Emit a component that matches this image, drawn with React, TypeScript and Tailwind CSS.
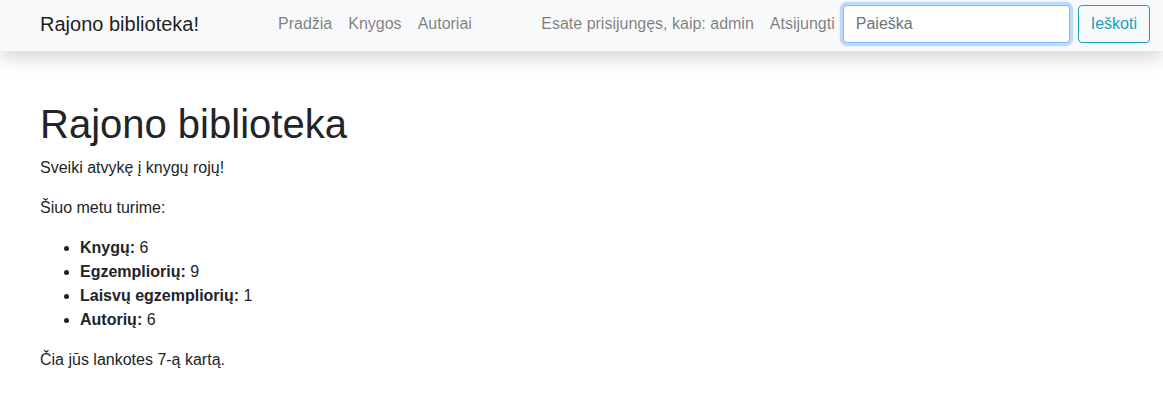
export default function App() {
  const stats = [
    { label: "Knygų:", value: 6 },
    { label: "Egzempliorių:", value: 9 },
    { label: "Laisvų egzempliorių:", value: 1 },
    { label: "Autorių:", value: 6 },
  ]

  return (
    <div className="min-h-screen bg-white text-[#212529] font-['Liberation_Sans',Arial,sans-serif] text-base leading-6">
      {/* Navbar */}
      <nav className="relative z-10 flex items-center h-[51px] pt-[5px] pb-[8px] pl-10 pr-[13px] bg-[#f8f9fa] shadow-[0_8px_16px_rgba(0,0,0,0.15)]">
        <a className="text-xl text-black/90 leading-[30px]">Rajono biblioteka!</a>
        <ul className="flex items-center ml-[71px]">
          {["Pradžia", "Knygos", "Autoriai"].map(link => (
            <li key={link}>
              <a className="px-2 text-black/50">{link}</a>
            </li>
          ))}
        </ul>
        <div className="flex items-center ml-auto">
          <span className="px-2 text-black/50">Esate prisijungęs, kaip: admin</span>
          <a className="px-2 text-black/50">Atsijungti</a>
          <form className="flex items-center gap-2">
            <input
              placeholder="Paieška"
              className="w-[227px] h-[38px] px-3 rounded border border-[#80bdff] bg-white text-base text-[#495057] placeholder:text-[#6c757d] outline-none shadow-[0_0_0_3.2px_rgba(0,123,255,0.25)]"
            />
            <button
              type="button"
              className="h-[38px] px-3 rounded border border-[#17a2b8] text-[#17a2b8] bg-transparent"
            >
              Ieškoti
            </button>
          </form>
        </div>
      </nav>

      {/* Content */}
      <main className="px-10 pt-[49px]">
        <h1 className="text-[40px] leading-[48px] font-normal mb-2">Rajono biblioteka</h1>
        <p className="mb-4">Sveiki atvykę į knygų rojų!</p>
        <p className="mb-4">Šiuo metu turime:</p>
        <ul className="list-disc pl-10 mb-4">
          {stats.map(s => (
            <li key={s.label}>
              <strong className="font-bold">{s.label}</strong> {s.value}
            </li>
          ))}
        </ul>
        <p className="mb-4">Čia jūs lankotes 7-ą kartą.</p>
      </main>
    </div>
  )
}
